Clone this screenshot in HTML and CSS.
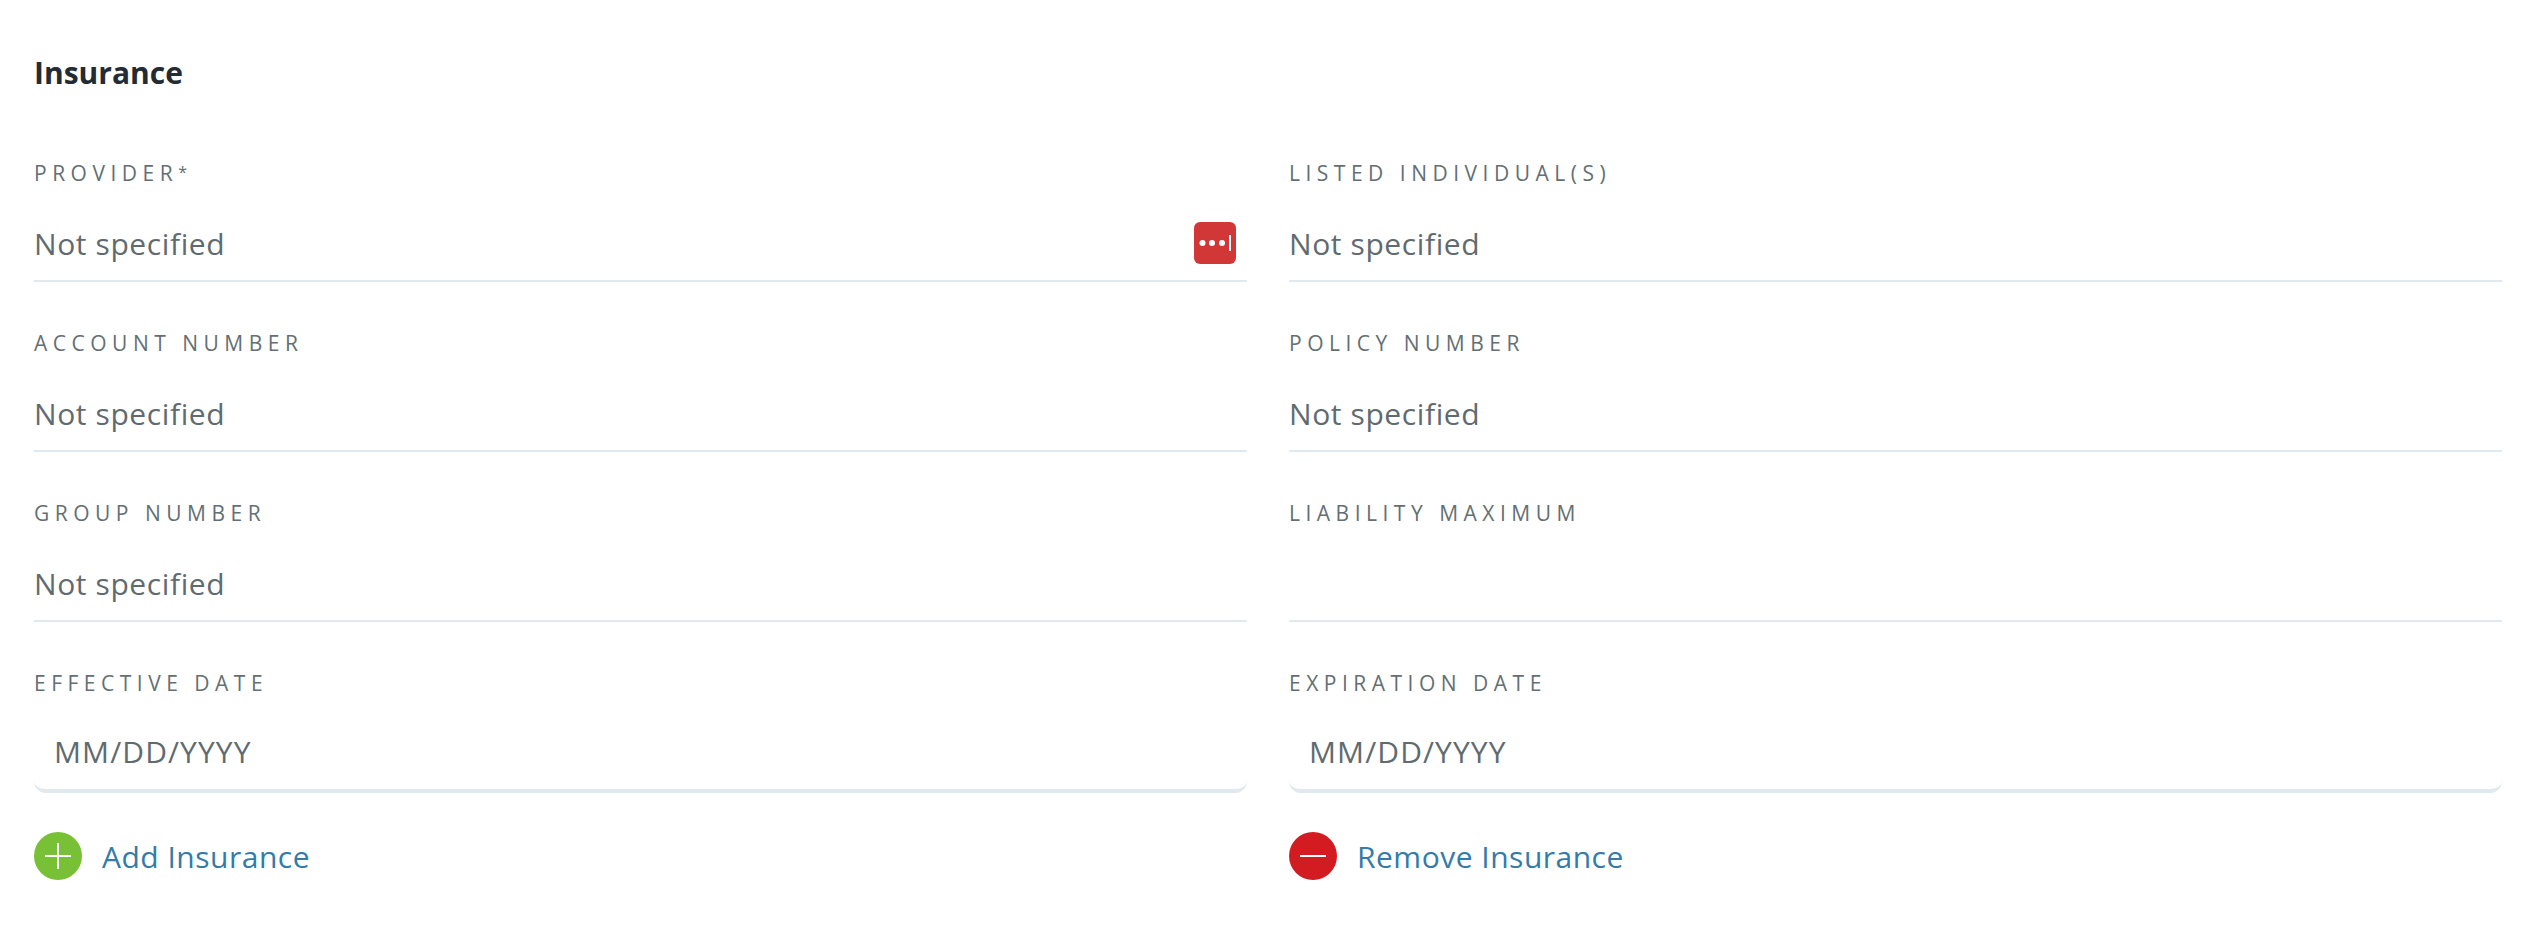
FILE: index.html
```html
<!DOCTYPE html>
<html lang="en">
<head>
    <meta charset="UTF-8">
    <title>Insurance</title>
    <link rel="stylesheet" href="styles.css">
</head>
<body>
    <h2 class="title">Insurance</h2>
    <div class="form-grid">
        <div class="field">
            <label>PROVIDER<span class="req">*</span></label>
            <div class="value has-icon">
                Not specified
                <svg class="pw-icon" width="42" height="42" viewBox="0 0 42 42">
                    <rect width="42" height="42" rx="6" fill="#d13737"/>
                    <circle cx="8.5" cy="21" r="3" fill="#fff"/>
                    <circle cx="18" cy="21" r="3" fill="#fff"/>
                    <circle cx="28" cy="21" r="3" fill="#fff"/>
                    <rect x="35" y="13" width="2" height="16" fill="#fff"/>
                </svg>
            </div>
        </div>
        <div class="field">
            <label>LISTED INDIVIDUAL(S)</label>
            <div class="value">Not specified</div>
        </div>
        <div class="field">
            <label>ACCOUNT NUMBER</label>
            <div class="value">Not specified</div>
        </div>
        <div class="field">
            <label>POLICY NUMBER</label>
            <div class="value">Not specified</div>
        </div>
        <div class="field">
            <label>GROUP NUMBER</label>
            <div class="value">Not specified</div>
        </div>
        <div class="field">
            <label>LIABILITY MAXIMUM</label>
            <div class="value"></div>
        </div>
        <div class="field">
            <label>EFFECTIVE DATE</label>
            <div class="value date">MM/DD/YYYY</div>
        </div>
        <div class="field">
            <label>EXPIRATION DATE</label>
            <div class="value date">MM/DD/YYYY</div>
        </div>
        <a class="action" href="#">
            <svg width="48" height="48" viewBox="0 0 48 48">
                <circle cx="24" cy="24" r="24" fill="#78c035"/>
                <rect x="11" y="23" width="26" height="2" fill="#fff"/>
                <rect x="23" y="11" width="2" height="26" fill="#fff"/>
            </svg>
            Add Insurance
        </a>
        <a class="action" href="#">
            <svg width="48" height="48" viewBox="0 0 48 48">
                <circle cx="24" cy="24" r="24" fill="#d21c21"/>
                <rect x="11" y="23" width="26" height="2" fill="#fff"/>
            </svg>
            Remove Insurance
        </a>
    </div>
</body>
</html>
```

FILE: styles.css
```css
* {
    margin: 0;
    padding: 0;
    box-sizing: border-box;
}

body {
    font-family: 'Open Sans', 'Lato', sans-serif;
    background: #fff;
    color: #5f6b6f;
    padding: 56px 24px 0 34px;
}

.title {
    font-size: 30px;
    line-height: 34px;
    font-weight: 700;
    color: #232b34;
    margin-bottom: 71px;
}

.form-grid {
    display: grid;
    grid-template-columns: 1213px 1213px;
    column-gap: 42px;
}

.field {
    height: 170px;
}

label {
    display: block;
    font-size: 21px;
    line-height: 24px;
    letter-spacing: 5.5px;
    color: #636f73;
    margin-bottom: 22px;
}

.req {
    font-size: 16px;
    line-height: 0;
    vertical-align: 3px;
    letter-spacing: 0;
}

.value {
    display: flex;
    align-items: center;
    justify-content: space-between;
    height: 75px;
    padding-bottom: 1px;
    font-size: 30px;
    letter-spacing: 0.6px;
    border-bottom: 2px solid #e0e9ef;
}

.has-icon {
    padding-right: 11px;
}

.pw-icon {
    flex: none;
}

.value.date {
    height: 76px;
    padding-left: 20px;
    padding-bottom: 4px;
    letter-spacing: 1.1px;
    border-bottom: 4px solid #e0e9ef;
    border-radius: 0 0 12px 12px;
}

.action {
    display: flex;
    align-items: center;
    gap: 20px;
    font-size: 30px;
    letter-spacing: 0.5px;
    color: #337ba8;
    text-decoration: none;
    margin-top: -9px;
    height: 48px;
}
```
